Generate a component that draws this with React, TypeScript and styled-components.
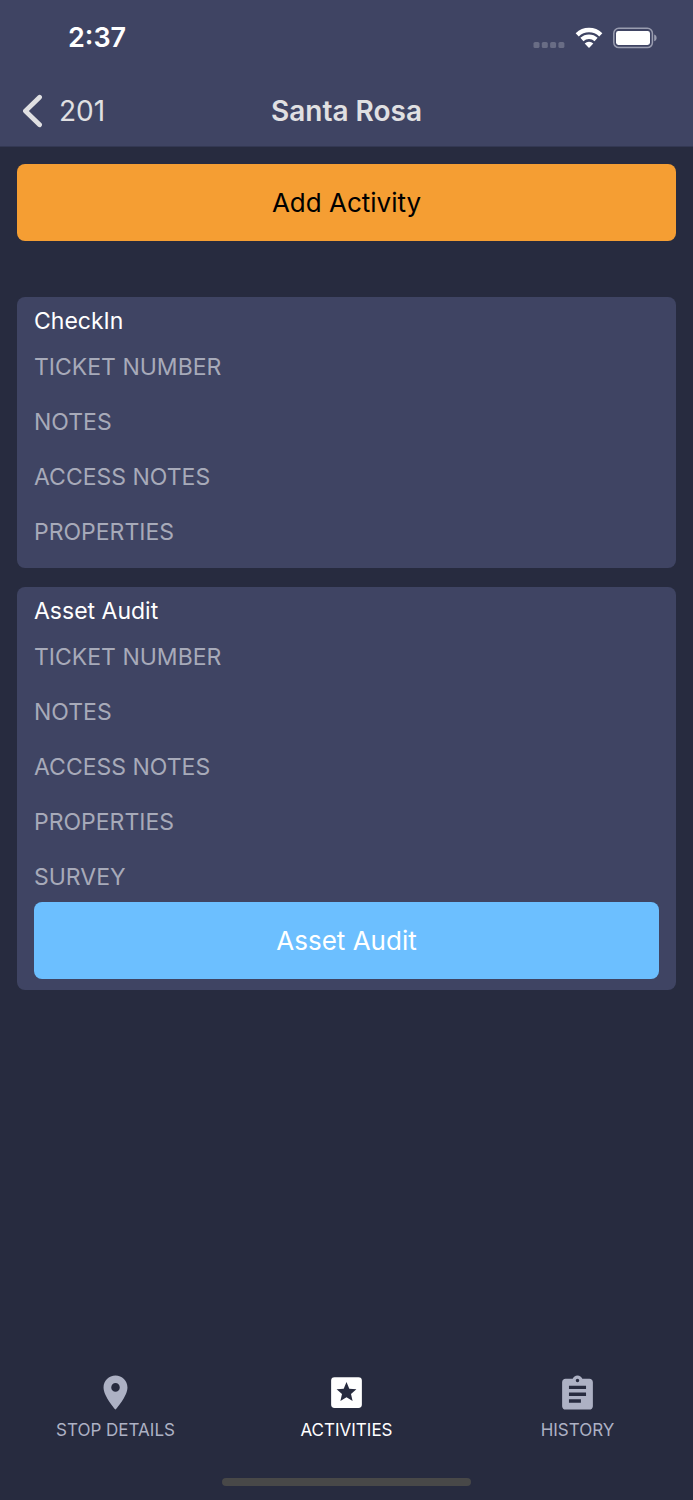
import React from "react";
import styled, { createGlobalStyle } from "styled-components";

const colors = {
  page: "#272b3f",
  panel: "#3f4463",
  panelEdge: "#333853",
  accent: "#f59e33",
  action: "#6cbfff",
  title: "#e0e0e2",
  muted: "#a7aab9",
  tab: "#adb1c4",
};

const GlobalStyle = createGlobalStyle`
  *, *::before, *::after { box-sizing: border-box; }
  body {
    margin: 0;
    background: ${colors.page};
    color: #fff;
    font-family: Inter, "Liberation Sans", sans-serif;
  }
  button { font: inherit; cursor: pointer; }
`;

const Screen = styled.div`
  display: flex;
  flex-direction: column;
  min-height: 100vh;
`;

const Header = styled.header`
  border-bottom: 1px solid ${colors.panelEdge};
  background: ${colors.panel};
`;

const StatusBar = styled.div`
  display: flex;
  align-items: center;
  justify-content: space-between;
  height: 76px;
  padding: 0 36px 0 68px;
`;

const Clock = styled.time`
  font-size: 27px;
  line-height: 32px;
  font-weight: 600;
`;

const StatusIcons = styled.div`
  display: flex;
  align-items: center;
  gap: 10px;

  svg { display: block; }
`;

const NavBar = styled.div`
  display: grid;
  grid-template-columns: 1fr auto 1fr;
  align-items: center;
  height: 70px;
  padding: 0 22px;
`;

const BackButton = styled.button`
  display: flex;
  align-items: center;
  justify-self: start;
  gap: 16px;
  padding: 0;
  border: 0;
  background: none;
  color: ${colors.title};
  font-size: 28px;
  line-height: 36px;
`;

const Title = styled.h1`
  margin: 0;
  color: ${colors.title};
  font-size: 28px;
  line-height: 36px;
  font-weight: 600;
`;

const Content = styled.main`
  flex: 1;
  padding: 17px;
`;

const BigButton = styled.button<{ $tone: "accent" | "action" }>`
  display: block;
  width: 100%;
  height: 77px;
  padding: 0;
  border: 0;
  border-radius: 8px;
  background: ${({ $tone }) => colors[$tone]};
  color: ${({ $tone }) => ($tone === "accent" ? "#000" : "#fff")};
  font-size: 26px;
  line-height: 32px;
`;

const CardList = styled.div`
  display: flex;
  flex-direction: column;
  gap: 19px;
  margin-top: 56px;
`;

const Card = styled.section<{ $hasAction: boolean }>`
  padding: 8px 17px ${({ $hasAction }) => ($hasAction ? 11 : 20)}px;
  border-radius: 8px;
  background: ${colors.panel};
`;

const CardTitle = styled.h2`
  margin: 0 0 14px;
  font-size: 23px;
  line-height: 32px;
  font-weight: 400;
`;

const Fields = styled.ul`
  display: flex;
  flex-direction: column;
  gap: 23px;
  margin: 0;
  padding: 0;
  list-style: none;
`;

const Field = styled.li`
  color: ${colors.muted};
  font-size: 23px;
  line-height: 32px;
`;

const CardAction = styled.div`
  margin-top: 9px;
`;

const Footer = styled.footer`
  display: flex;
  flex-direction: column;
  align-items: center;
  gap: 38px;
  padding-bottom: 14px;
`;

const Tabs = styled.nav`
  display: grid;
  grid-template-columns: repeat(3, 1fr);
  width: 100%;
`;

const Tab = styled.button<{ $active: boolean }>`
  display: flex;
  flex-direction: column;
  align-items: center;
  gap: 7px;
  padding: 0;
  border: 0;
  background: none;
  color: ${({ $active }) => ($active ? "#fff" : colors.tab)};
  font-size: 17px;
  line-height: 20px;
`;

const TabIcon = styled.svg`
  display: block;
  width: 41px;
  height: 41px;
  fill: currentColor;
`;

const HomeIndicator = styled.div`
  width: 36%;
  height: 8px;
  border-radius: 4px;
  background: #484848;
`;

const SignalDots = () => (
  <svg width="32" height="22" viewBox="0 0 32 22" fill="#fff" fillOpacity="0.22" aria-hidden="true">
    {[0.5, 8.8, 17.1, 25.4].map((x) => (
      <rect key={x} x={x} y="15" width="6" height="6" rx="1.6" />
    ))}
  </svg>
);

const Wifi = () => (
  <svg width="28" height="22" viewBox="0 0 28 22" aria-hidden="true">
    <g fill="none" stroke="#fff" strokeWidth="4.5">
      <path d="M2.2 7.8a17.2 17.2 0 0 1 23.6 0" />
      <path d="M6.9 12.5a10.4 10.4 0 0 1 14.2 0" />
    </g>
    <path fill="#fff" d="M14 21l-4.3-4.6a6.3 6.3 0 0 1 8.6 0z" />
  </svg>
);

const Battery = () => (
  <svg width="44" height="22" viewBox="0 0 44 22" aria-hidden="true">
    <rect x="0.8" y="1.2" width="38.6" height="19.4" rx="5" fill="none" stroke="#9a9db0" strokeWidth="1.5" />
    <rect x="3" y="4" width="34" height="14" rx="2.4" fill="#fff" />
    <path d="M41.2 7.6c3.2 1 3.2 5.6 0 6.6z" fill="#9a9db0" />
  </svg>
);

const Chevron = () => (
  <svg width="21" height="34" viewBox="0 0 21 34" aria-hidden="true">
    <path
      d="M17.6 3.2L3.4 17l14.2 13.8"
      fill="none"
      stroke="currentColor"
      strokeWidth="4.7"
      strokeLinecap="round"
      strokeLinejoin="round"
    />
  </svg>
);

const activities = [
  { name: "CheckIn", fields: ["TICKET NUMBER", "NOTES", "ACCESS NOTES", "PROPERTIES"] },
  {
    name: "Asset Audit",
    fields: ["TICKET NUMBER", "NOTES", "ACCESS NOTES", "PROPERTIES", "SURVEY"],
    action: "Asset Audit",
  },
];

const tabs = [
  {
    label: "STOP DETAILS",
    active: false,
    path: "M12 2C8.13 2 5 5.13 5 9c0 5.25 7 13 7 13s7-7.75 7-13c0-3.87-3.13-7-7-7zm0 9.5a2.5 2.5 0 0 1 0-5 2.5 2.5 0 0 1 0 5z",
  },
  {
    label: "ACTIVITIES",
    active: true,
    path: "M5 3h14a2 2 0 0 1 2 2v14a2 2 0 0 1-2 2H5a2 2 0 0 1-2-2V5a2 2 0 0 1 2-2zM12 14.76L15.58 16.92 14.63 12.84 17.8 10.1 13.63 9.75 12 5.9 10.37 9.75 6.2 10.1 9.37 12.84 8.42 16.92z",
  },
  {
    label: "HISTORY",
    active: false,
    path: "M19 4h-4.18C14.4 2.84 13.3 2 12 2s-2.4.84-2.82 2H5c-1.1 0-2 .9-2 2v14c0 1.1.9 2 2 2h14c1.1 0 2-.9 2-2V6c0-1.1-.9-2-2-2zm-7 0c.55 0 1 .45 1 1s-.45 1-1 1-1-.45-1-1 .45-1 1-1zm2 14H7v-2h7v2zm3-4H7v-2h10v2zm0-4H7V8h10v2z",
  },
];

export default function App() {
  return (
    <Screen>
      <GlobalStyle />
      <Header>
        <StatusBar>
          <Clock>2:37</Clock>
          <StatusIcons>
            <SignalDots />
            <Wifi />
            <Battery />
          </StatusIcons>
        </StatusBar>
        <NavBar>
          <BackButton type="button">
            <Chevron />
            201
          </BackButton>
          <Title>Santa Rosa</Title>
        </NavBar>
      </Header>

      <Content>
        <BigButton type="button" $tone="accent">
          Add Activity
        </BigButton>
        <CardList>
          {activities.map(({ name, fields, action }) => (
            <Card key={name} $hasAction={Boolean(action)}>
              <CardTitle>{name}</CardTitle>
              <Fields>
                {fields.map((field) => (
                  <Field key={field}>{field}</Field>
                ))}
              </Fields>
              {action && (
                <CardAction>
                  <BigButton type="button" $tone="action">
                    {action}
                  </BigButton>
                </CardAction>
              )}
            </Card>
          ))}
        </CardList>
      </Content>

      <Footer>
        <Tabs>
          {tabs.map(({ label, active, path }) => (
            <Tab key={label} type="button" $active={active} aria-current={active ? "page" : undefined}>
              <TabIcon viewBox="0 0 24 24" aria-hidden="true">
                <path fillRule="evenodd" d={path} />
              </TabIcon>
              {label}
            </Tab>
          ))}
        </Tabs>
        <HomeIndicator />
      </Footer>
    </Screen>
  );
}
